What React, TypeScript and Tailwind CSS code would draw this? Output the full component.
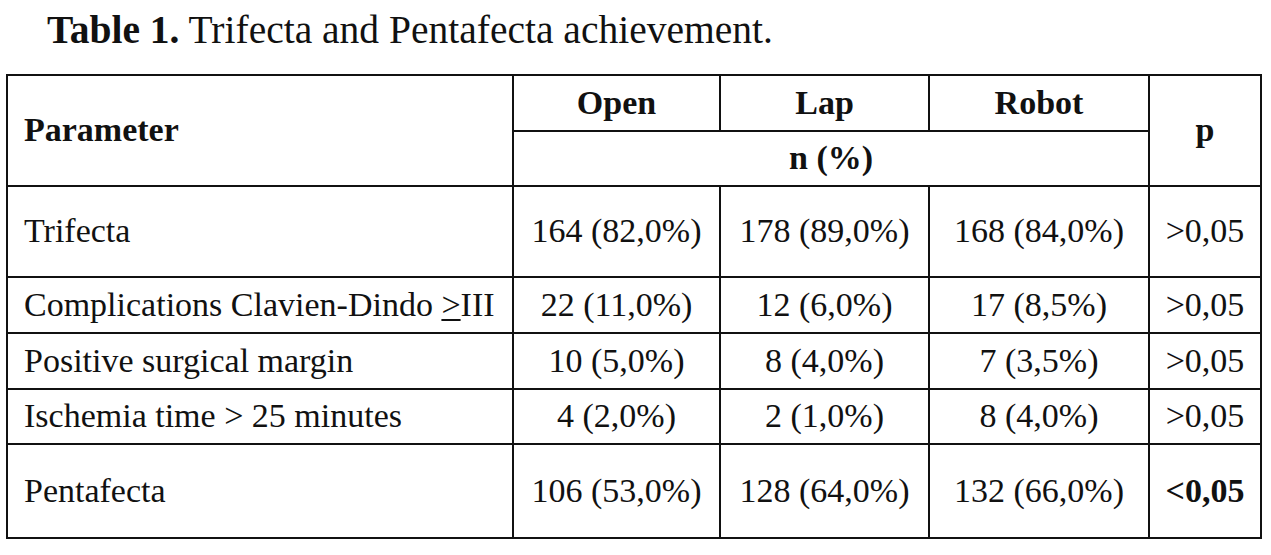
import type { ReactNode } from 'react'

type Row = {
  label: ReactNode
  open: string
  lap: string
  robot: string
  p: string
  h: string
  bold?: boolean
}

const ROWS: Row[] = [
  { label: 'Trifecta', open: '164 (82,0%)', lap: '178 (89,0%)', robot: '168 (84,0%)', p: '>0,05', h: 'h-[89px]' },
  {
    label: (
      <span>
        Complications Clavien-Dindo{' '}
        <span className="underline decoration-[1.5px] underline-offset-[3px]">&gt;</span>III
      </span>
    ),
    open: '22 (11,0%)',
    lap: '12 (6,0%)',
    robot: '17 (8,5%)',
    p: '>0,05',
    h: 'h-[54px]',
  },
  { label: 'Positive surgical margin', open: '10 (5,0%)', lap: '8 (4,0%)', robot: '7 (3,5%)', p: '>0,05', h: 'h-[54px]' },
  { label: 'Ischemia time > 25 minutes', open: '4 (2,0%)', lap: '2 (1,0%)', robot: '8 (4,0%)', p: '>0,05', h: 'h-[53px]' },
  { label: 'Pentafecta', open: '106 (53,0%)', lap: '128 (64,0%)', robot: '132 (66,0%)', p: '<0,05', h: 'h-[92px]', bold: true },
]

const CELL = 'bg-white flex items-center justify-center'

export default function App() {
  return (
    <div className="min-h-screen bg-white text-[#111] font-['Liberation_Serif','Times_New_Roman',serif]">
      {/* caption */}
      <div className="pt-[11px] pl-[47px] text-[39.5px] leading-none">
        <span className="font-bold">Table 1.</span> Trifecta and Pentafecta achievement.
      </div>

      <div className="mt-[23px] ml-[6px] w-[1256px] bg-[#111] p-[2px]">
        <div className="grid grid-cols-[504px_205px_207px_218px_110px] gap-[2px] text-[34px] leading-none">
          {/* header */}
          <div className={`${CELL} row-span-2 justify-start pl-4 font-bold`}>Parameter</div>
          <div className={`${CELL} h-[54px] font-bold`}>Open</div>
          <div className={`${CELL} h-[54px] font-bold`}>Lap</div>
          <div className={`${CELL} h-[54px] font-bold`}>Robot</div>
          <div className={`${CELL} row-span-2 font-bold`}>p</div>
          <div className={`${CELL} col-span-3 h-[53px] font-bold`}>n (%)</div>

          {ROWS.map((r, i) => (
            <div key={i} className="contents">
              <div className={`${CELL} ${r.h} justify-start pl-4`}>{r.label}</div>
              <div className={CELL}>{r.open}</div>
              <div className={CELL}>{r.lap}</div>
              <div className={CELL}>{r.robot}</div>
              <div className={`${CELL} ${r.bold ? 'font-bold' : ''}`}>{r.p}</div>
            </div>
          ))}
        </div>
      </div>
    </div>
  )
}
